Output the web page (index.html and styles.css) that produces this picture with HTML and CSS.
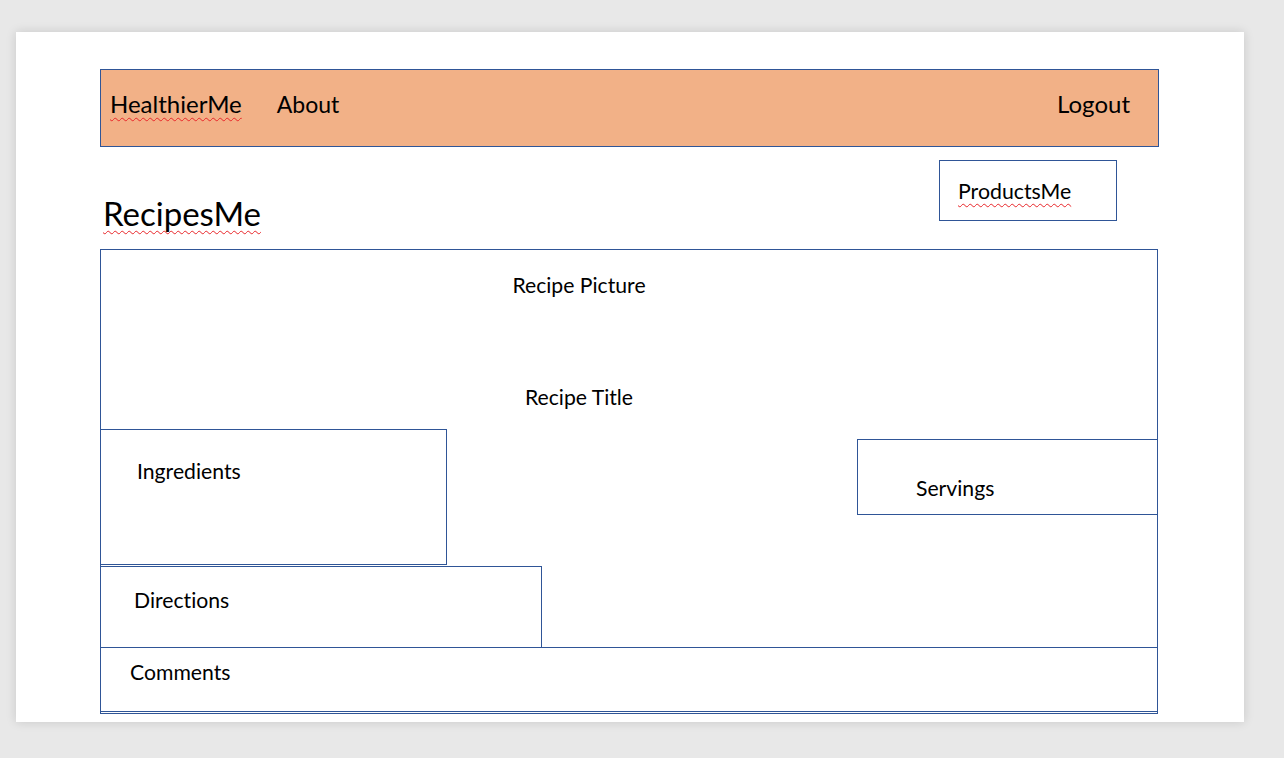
FILE: index.html
```html
<!DOCTYPE html>
<html lang="en">
<head>
<meta charset="utf-8">
<title>RecipesMe mockup</title>
<link rel="stylesheet" href="styles.css">
</head>
<body>
  <div class="page">
    <nav class="nav">
      <span class="nav-item brand spell">HealthierMe</span>
      <span class="nav-item about">About</span>
      <span class="nav-item logout">Logout</span>
    </nav>
    <div class="header-row">
      <h1 class="title spell">RecipesMe</h1>
      <div class="products"><span class="spell">ProductsMe</span></div>
    </div>
    <section class="recipe">
      <div class="label picture">Recipe Picture</div>
      <div class="label rtitle">Recipe Title</div>
      <div class="row">
        <div class="box ingredients">Ingredients</div>
        <div class="box servings">Servings</div>
      </div>
      <div class="box directions">Directions</div>
      <div class="box comments">Comments</div>
    </section>
  </div>
</body>
</html>
```
FILE: styles.css
```css
html, body {
  margin: 0;
  padding: 0;
}
body {
  background: #e8e8e8;
  font-family: Lato, "Open Sans", sans-serif;
  font-variant-ligatures: none;
  color: #000;
  width: 1284px;
  height: 758px;
  overflow: hidden;
}
.page {
  box-sizing: border-box;
  margin: 32px 0 0 16px;
  width: 1228px;
  height: 690px;
  background: #fff;
  box-shadow: 0 0 10px rgba(0, 0, 0, 0.14);
  padding: 37px 0 0 84px;
}
.spell {
  text-decoration: underline wavy #e8262a;
  text-decoration-thickness: 1px;
  text-underline-offset: 4px;
  text-decoration-skip-ink: none;
}
.nav {
  box-sizing: border-box;
  width: 1059px;
  height: 78px;
  background: #f2b187;
  border: 1px solid #2f5597;
  display: flex;
  align-items: flex-start;
  padding: 22px 28px 0 9px;
}
.nav-item {
  font-size: 24px;
  line-height: 24px;
}
.about {
  margin-left: 35px;
  font-size: 23px;
}
.logout {
  margin-left: auto;
}
.header-row {
  box-sizing: border-box;
  width: 1059px;
  height: 102px;
  display: flex;
  align-items: flex-start;
  justify-content: space-between;
}
.title {
  margin: 49px 0 0 3px;
  font-size: 33px;
  line-height: 34px;
  font-weight: normal;
}
.products {
  box-sizing: border-box;
  margin: 13px 42px 0 0;
  width: 178px;
  height: 61px;
  border: 1px solid #2f5597;
  padding: 18px 0 0 18px;
  font-size: 21.3px;
  line-height: 24px;
}
.recipe {
  box-sizing: border-box;
  width: 1058px;
  height: 465px;
  border: 1px solid #2f5597;
  display: flex;
  flex-direction: column;
  padding-bottom: 1px;
  font-size: 21.2px;
  line-height: 24px;
}
.label {
  text-align: center;
  margin-right: 100px;
}
.picture {
  margin-top: 23px;
}
.rtitle {
  margin-top: 88px;
}
.row {
  display: flex;
  align-items: flex-start;
  margin-top: 20px;
}
.box {
  box-sizing: border-box;
  border: 1px solid #2f5597;
  background: #fff;
}
.ingredients {
  width: 347px;
  height: 136px;
  margin-left: -1px;
  padding: 29px 0 0 36px;
}
.servings {
  width: 301px;
  height: 76px;
  margin: 10px -1px 0 auto;
  padding: 36px 0 0 58px;
}
.directions {
  width: 442px;
  height: 82px;
  margin: 1px 0 0 -1px;
  padding: 21px 0 0 33px;
}
.comments {
  width: 1058px;
  height: 65px;
  margin: -1px 0 0 -1px;
  padding: 12px 0 0 29px;
  background: transparent;
}
```
